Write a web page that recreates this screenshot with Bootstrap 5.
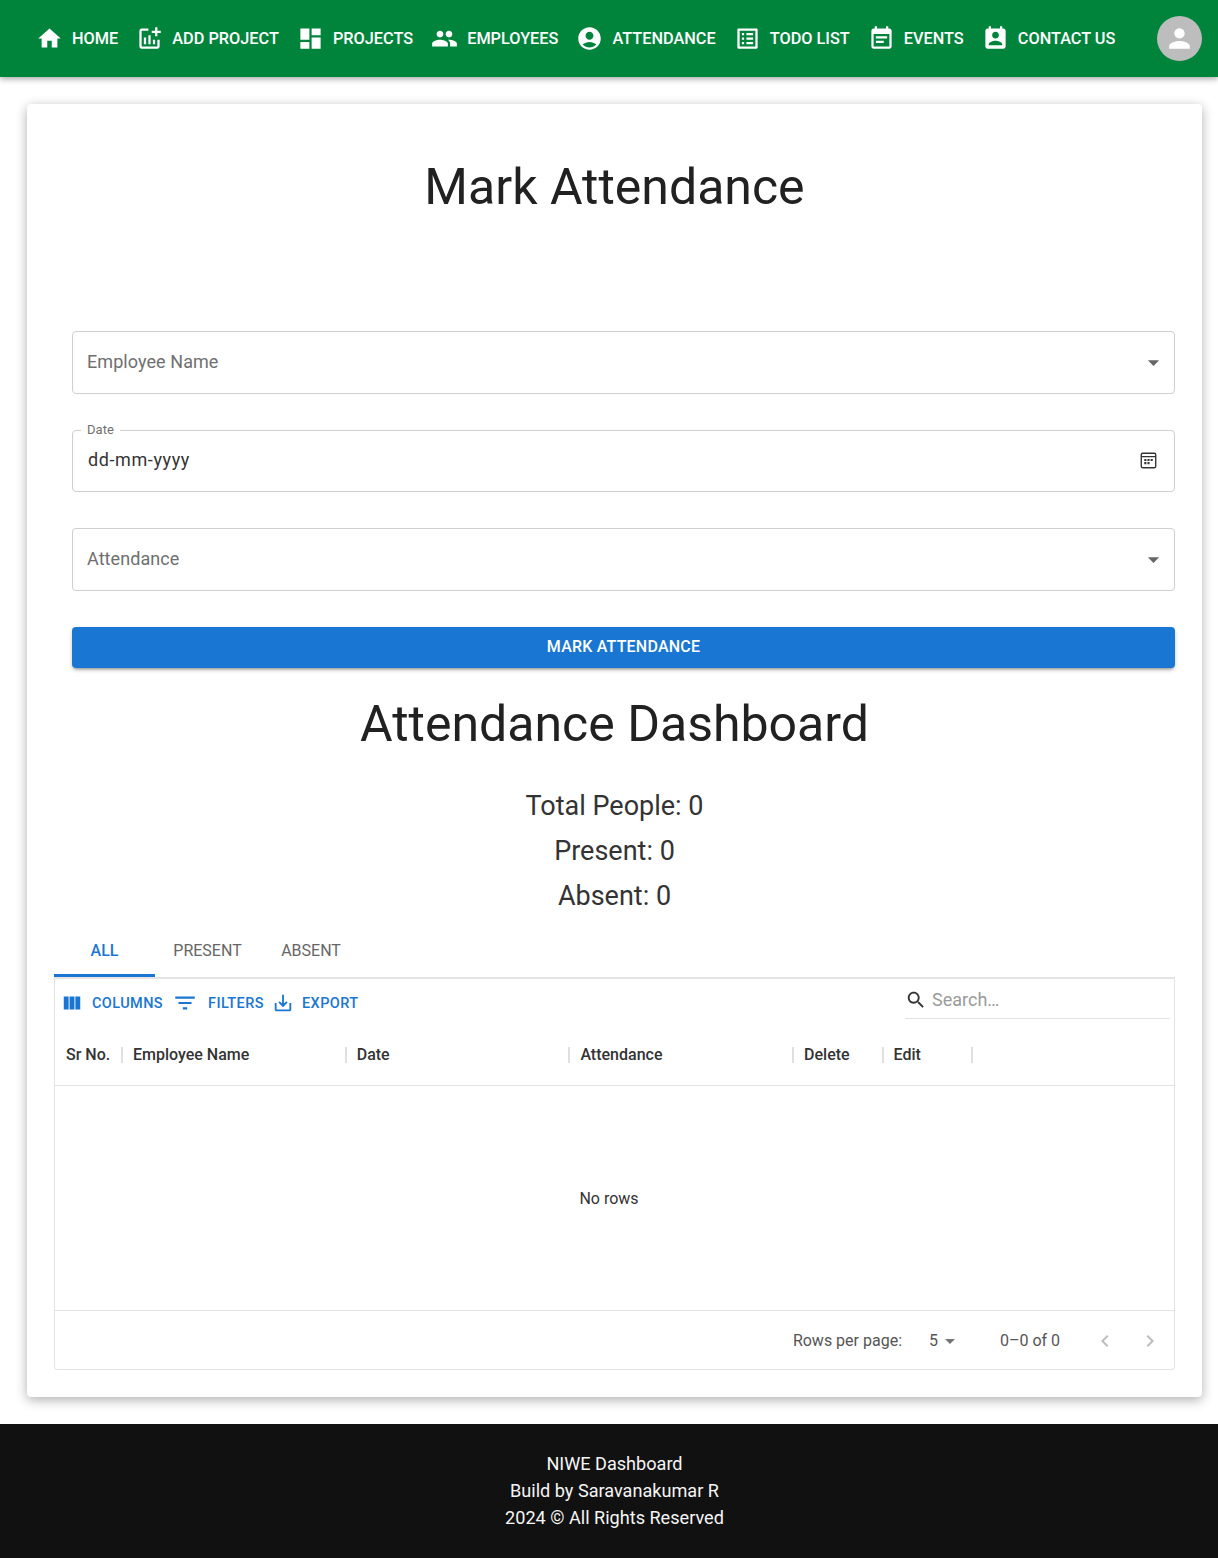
<!DOCTYPE html>
<html lang="en">
<head>
    <meta charset="UTF-8">
    <meta name="viewport" content="width=device-width, initial-scale=1">
    <title>Mark Attendance</title>
    <link rel="stylesheet" href="https://cdn.jsdelivr.net/npm/bootstrap@5.3.0/dist/css/bootstrap.min.css">
    <style>
        body { font-family: Roboto, "Liberation Sans", sans-serif; color: #212121; background: #fff; }
        svg { fill: currentColor; flex: none; display: block; }

        .top-bar { height: 77px; padding: 0 16px 0 36px; background: #00843c; box-shadow: 0 2px 6px rgba(0,0,0,.35); }
        .top-link { display: flex; align-items: center; gap: 9px; padding: 2px 0 0; margin-right: 18.1px; color: #fff; font-size: 16.3px; font-weight: 500; text-transform: uppercase; text-decoration: none; white-space: nowrap; }
        .top-link svg { width: 27px; height: 27px; margin-bottom: 2px; }
        .top-avatar { width: 45px; height: 45px; border-radius: 50%; background: #bdbdbd; color: #fff; }
        .top-avatar svg { width: 31px; height: 31px; }

        .sheet { margin: 27px 16px 27px 27px; height: 1293px; padding: 0 27px; border: 0; border-radius: 4px; box-shadow: 0 3px 12px rgba(0,0,0,.32); }
        .sheet-title { font-size: 50px; font-weight: 400; line-height: 1.2; margin: 0; text-align: center; color: #212121; }
        .mark-title { padding-top: 53px; height: 227px; }
        .mark-form { margin-left: 18px; gap: 36px; }
        .field-box { height: 62.67px; border: 1px solid #cfcfcf; border-radius: 4px; padding: 0 14px 2px; font-size: 18px; letter-spacing: .07px; color: #6f6f6f; position: relative; }
        .field-box .caret-icon { width: 27px; height: 27px; color: #666; margin: 2px -7px 0 0; }
        .field-legend { position: absolute; top: -9px; left: 8px; padding: 0 6px; background: #fff; font-size: 13px; line-height: 16px; color: #6f6f6f; }
        .date-value { color: #333; padding-left: 1px; letter-spacing: .6px; }
        .date-icon { width: 19px; height: 19px; color: #333; margin: 2px 2px 0 0; }
        .mark-btn { height: 41px; border: 0; border-radius: 4px; background: #1976d2; font-size: 16px; font-weight: 500; text-transform: uppercase; letter-spacing: .2px; box-shadow: 0 3px 3px -2px rgba(0,0,0,.3), 0 2px 4px rgba(0,0,0,.2); }
        .board-title { margin-top: 26.5px; }
        .stat-list { margin-top: 30px; }
        .stat-line { font-size: 27px; line-height: 45px; text-align: center; color: #333; }

        .tab-row { margin-top: 4px; height: 54px; }
        .tab-link { display: flex; align-items: center; justify-content: center; padding: 5px 0 0; height: 54px; font-size: 16px; color: #666; text-transform: uppercase; text-decoration: none; border-bottom: 3px solid transparent; }
        .tab-all { width: 101px; color: #1976d2; font-weight: 500; border-bottom-color: #1976d2; }
        .tab-present { margin-left: 17px; width: 71px; }
        .tab-absent { margin-left: 37px; width: 62px; }

        .data-box { height: 392.5px; border: 1px solid #e4e4e4; border-top-width: 2px; border-radius: 0 0 4px 4px; }
        .grid-tools { height: 46px; padding: 0 4px 0 6px; align-items: center; }
        .tool-group { padding-top: 2px; }
        .tool-btn { display: flex; align-items: center; color: #1976d2; font-size: 14.5px; font-weight: 500; letter-spacing: .4px; text-transform: uppercase; white-space: nowrap; }
        .tool-btn svg { width: 22px; height: 22px; }
        .tool-columns { width: 111px; gap: 9px; }
        .tool-filters { width: 100px; gap: 10px; }
        .tool-filters svg { width: 26px; height: 26px; }
        .tool-export { gap: 8px; }
        .grid-search { width: 265px; height: 40px; gap: 5px; margin-bottom: 6px; padding-top: 2px; color: #9a9a9a; font-size: 18px; border-bottom: 1px solid #e4e4e4; }
        .grid-search svg { width: 22px; height: 22px; color: #333; }

        .grid-head { height: 61px; border-bottom: 1px solid #e4e4e4; font-size: 16px; font-weight: 500; color: #333; }
        .head-cell { height: 100%; display: flex; align-items: center; padding-left: 10px; position: relative; }
        .head-cell::after { content: ""; position: absolute; right: 0; top: 22px; height: 16px; width: 2px; background: #e0e0e0; }
        .cell-sr { width: 68px; padding-left: 11px; }
        .cell-wide { width: 223.7px; }
        .cell-narrow { width: 89.5px; }
        .grid-empty { height: 224px; font-size: 16px; color: #333; padding: 2px 11px 0 0; }
        .grid-foot { height: 59px; border-top: 1px solid #e4e4e4; font-size: 16px; color: #555; padding: 1px 12px 0 0; }
        .rows-count { margin-left: 27px; width: 44px; }
        .rows-count svg { width: 24px; height: 24px; color: #757575; }
        .page-range { margin-left: 27px; width: 78px; }
        .page-arrow { width: 24px; height: 24px; color: #bdbdbd; }
        .arrow-prev { margin-left: 15px; }
        .arrow-next { margin-left: 21px; }

        .page-foot { height: 134px; background: #111; color: #f5f5f5; font-size: 18.1px; line-height: 27px; padding: 26px 0 0 11px; text-align: center; }
    </style>
</head>
<body>

    <nav class="navbar top-bar flex-nowrap justify-content-between">
        <div class="d-flex align-items-center">
            <a href="#" class="top-link"><svg viewBox="0 0 24 24"><path d="M10 20v-6h4v6h5v-8h3L12 3 2 12h3v8z"/></svg>Home</a>
            <a href="#" class="top-link"><svg viewBox="0 0 24 24"><path d="M22 5v2h-3v3h-2V7h-3V5h3V2h2v3h3zm-3 14H5V5h6V3H5c-1.1 0-2 .9-2 2v14c0 1.1.9 2 2 2h14c1.1 0 2-.9 2-2v-6h-2v6zm-4-6v4h2v-4h-2zm-4 4h2V9h-2v8zm-2 0v-6H7v6h2z"/></svg>Add Project</a>
            <a href="#" class="top-link"><svg viewBox="0 0 24 24"><path d="M3 13h8V3H3v10zm0 8h8v-6H3v6zm10 0h8V11h-8v10zm0-18v6h8V3h-8z"/></svg>Projects</a>
            <a href="#" class="top-link"><svg viewBox="0 0 24 24"><path d="M16 11c1.66 0 2.99-1.34 2.99-3S17.66 5 16 5c-1.66 0-3 1.34-3 3s1.34 3 3 3zm-8 0c1.66 0 2.99-1.34 2.99-3S9.66 5 8 5C6.34 5 5 6.34 5 8s1.34 3 3 3zm0 2c-2.33 0-7 1.17-7 3.5V19h14v-2.5c0-2.33-4.67-3.5-7-3.5zm8 0c-.29 0-.62.02-.97.05 1.16.84 1.97 1.97 1.97 3.45V19h6v-2.5c0-2.33-4.67-3.5-7-3.5z"/></svg>Employees</a>
            <a href="#" class="top-link"><svg viewBox="0 0 24 24"><path d="M12 2C6.48 2 2 6.48 2 12s4.48 10 10 10 10-4.48 10-10S17.52 2 12 2zm0 4c1.93 0 3.5 1.57 3.5 3.5S13.93 13 12 13s-3.5-1.57-3.5-3.5S10.07 6 12 6zm0 14c-2.03 0-4.43-.82-6.14-2.88C7.55 15.8 9.68 15 12 15s4.45.8 6.14 2.12C16.43 19.18 14.03 20 12 20z"/></svg>Attendance</a>
            <a href="#" class="top-link"><svg viewBox="0 0 24 24"><path d="M19 5v14H5V5h14m1.1-2H3.9c-.5 0-.9.4-.9.9v16.2c0 .4.4.9.9.9h16.2c.4 0 .9-.5.9-.9V3.9c0-.5-.5-.9-.9-.9zM11 7h6v2h-6V7zm0 4h6v2h-6v-2zm0 4h6v2h-6zM7 7h2v2H7zm0 4h2v2H7zm0 4h2v2H7z"/></svg>Todo List</a>
            <a href="#" class="top-link"><svg viewBox="0 0 24 24"><path d="M17 10H7v2h10v-2zm2-7h-1V1h-2v2H8V1H6v2H5c-1.11 0-1.99.9-1.99 2L3 19c0 1.1.89 2 2 2h14c1.1 0 2-.9 2-2V5c0-1.1-.9-2-2-2zm0 16H5V8h14v11zm-5-5H7v2h7v-2z"/></svg>Events</a>
            <a href="#" class="top-link"><svg viewBox="0 0 24 24"><path d="M19 3h-1V1h-2v2H8V1H6v2H5c-1.11 0-2 .9-2 2v14c0 1.1.89 2 2 2h14c1.1 0 2-.9 2-2V5c0-1.1-.9-2-2-2zm-7 3c1.66 0 3 1.34 3 3s-1.34 3-3 3-3-1.34-3-3 1.34-3 3-3zm6 12H6v-1c0-2 4-3.1 6-3.1s6 1.1 6 3.1v1z"/></svg>Contact Us</a>
        </div>
        <div class="top-avatar d-flex align-items-center justify-content-center">
            <svg viewBox="0 0 24 24"><path d="M12 12c2.21 0 4-1.79 4-4s-1.79-4-4-4-4 1.79-4 4 1.79 4 4 4zm0 2c-2.67 0-8 1.34-8 4v2h16v-2c0-2.66-5.33-4-8-4z"/></svg>
        </div>
    </nav>

    <main class="card sheet">
        <h1 class="sheet-title mark-title">Mark Attendance</h1>

        <form class="mark-form d-flex flex-column">
            <div class="field-box d-flex align-items-center justify-content-between">
                <span>Employee Name</span>
                <svg class="caret-icon" viewBox="0 0 24 24"><path d="M7 10l5 5 5-5z"/></svg>
            </div>
            <div class="field-box d-flex align-items-center justify-content-between">
                <span class="field-legend">Date</span>
                <span class="date-value">dd-mm-yyyy</span>
                <svg class="date-icon" viewBox="0 0 18 18"><path d="M3.5 1.500h11a2 2 0 0 1 2 2v11a2 2 0 0 1-2 2h-11a2 2 0 0 1-2-2v-11a2 2 0 0 1 2-2zm0 1.300a.7.7 0 0 0-.7.7v1.200h12.400V3.500a.7.7 0 0 0-.7-.7zM2.800 6v8.500a.7.7 0 0 0 .7.7h11a.7.7 0 0 0 .7-.7V6zM5 7.500h2v2H5zm3 0h2v2H8zm3 0h2v2h-2zM5 10.500h2v2H5zm3 0h2v2H8z"/></svg>
            </div>
            <div class="field-box d-flex align-items-center justify-content-between">
                <span>Attendance</span>
                <svg class="caret-icon" viewBox="0 0 24 24"><path d="M7 10l5 5 5-5z"/></svg>
            </div>
            <button type="button" class="btn btn-primary mark-btn">Mark Attendance</button>
        </form>

        <h2 class="sheet-title board-title">Attendance Dashboard</h2>
        <div class="stat-list">
            <div class="stat-line">Total People: 0</div>
            <div class="stat-line">Present: 0</div>
            <div class="stat-line">Absent: 0</div>
        </div>

        <div class="tab-row d-flex">
            <a href="#" class="tab-link tab-all">All</a>
            <a href="#" class="tab-link tab-present">Present</a>
            <a href="#" class="tab-link tab-absent">Absent</a>
        </div>

        <section class="data-box d-flex flex-column">
            <div class="grid-tools d-flex justify-content-between">
                <div class="tool-group d-flex align-items-center">
                    <span class="tool-btn tool-columns"><svg viewBox="0 0 24 24"><path d="M14.67 5v14H9.33V5h5.34zm1 14H21V5h-5.33v14zm-7.34 0V5H3v14h5.33z"/></svg>Columns</span>
                    <span class="tool-btn tool-filters"><svg viewBox="0 0 24 24"><path d="M10 18h4v-2h-4v2zM3 6v2h18V6H3zm3 7h12v-2H6v2z"/></svg>Filters</span>
                    <span class="tool-btn tool-export"><svg viewBox="0 0 24 24"><path d="M19 12v7H5v-7H3v7c0 1.100.9 2 2 2h14c1.100 0 2-.9 2-2v-7h-2zm-6 .67l2.590-2.580L17 11.500l-5 5-5-5 1.410-1.410L11 12.670V3h2z"/></svg>Export</span>
                </div>
                <div class="grid-search d-flex align-items-center">
                    <svg viewBox="0 0 24 24"><path d="M15.500 14h-.79l-.28-.27C15.410 12.590 16 11.110 16 9.500 16 5.910 13.090 3 9.500 3S3 5.910 3 9.500 5.910 16 9.500 16c1.610 0 3.090-.59 4.230-1.570l.27.28v.79l5 4.990L20.490 19l-4.990-5zm-6 0C7.010 14 5 11.990 5 9.500S7.010 5 9.500 5 14 7.010 14 9.500 11.990 14 9.500 14z"/></svg>
                    <span>Search…</span>
                </div>
            </div>

            <div class="grid-head d-flex">
                <div class="head-cell cell-sr">Sr No.</div>
                <div class="head-cell cell-wide">Employee Name</div>
                <div class="head-cell cell-wide">Date</div>
                <div class="head-cell cell-wide">Attendance</div>
                <div class="head-cell cell-narrow">Delete</div>
                <div class="head-cell cell-narrow">Edit</div>
            </div>

            <div class="grid-empty d-flex align-items-center justify-content-center">No rows</div>

            <div class="grid-foot d-flex align-items-center justify-content-end">
                <span>Rows per page:</span>
                <span class="rows-count d-flex align-items-center">5<svg viewBox="0 0 24 24"><path d="M7 10l5 5 5-5z"/></svg></span>
                <span class="page-range">0–0 of 0</span>
                <svg class="page-arrow arrow-prev" viewBox="0 0 24 24"><path d="M15.410 7.410L14 6l-6 6 6 6 1.410-1.410L10.830 12z"/></svg>
                <svg class="page-arrow arrow-next" viewBox="0 0 24 24"><path d="M10 6L8.590 7.410 13.170 12l-4.580 4.590L10 18l6-6z"/></svg>
            </div>
        </section>
    </main>

    <footer class="page-foot">
        <div>NIWE Dashboard</div>
        <div>Build by Saravanakumar R</div>
        <div>2024 © All Rights Reserved</div>
    </footer>

    <script src="https://cdn.jsdelivr.net/npm/bootstrap@5.3.0/dist/js/bootstrap.bundle.min.js"></script>
</body>
</html>
